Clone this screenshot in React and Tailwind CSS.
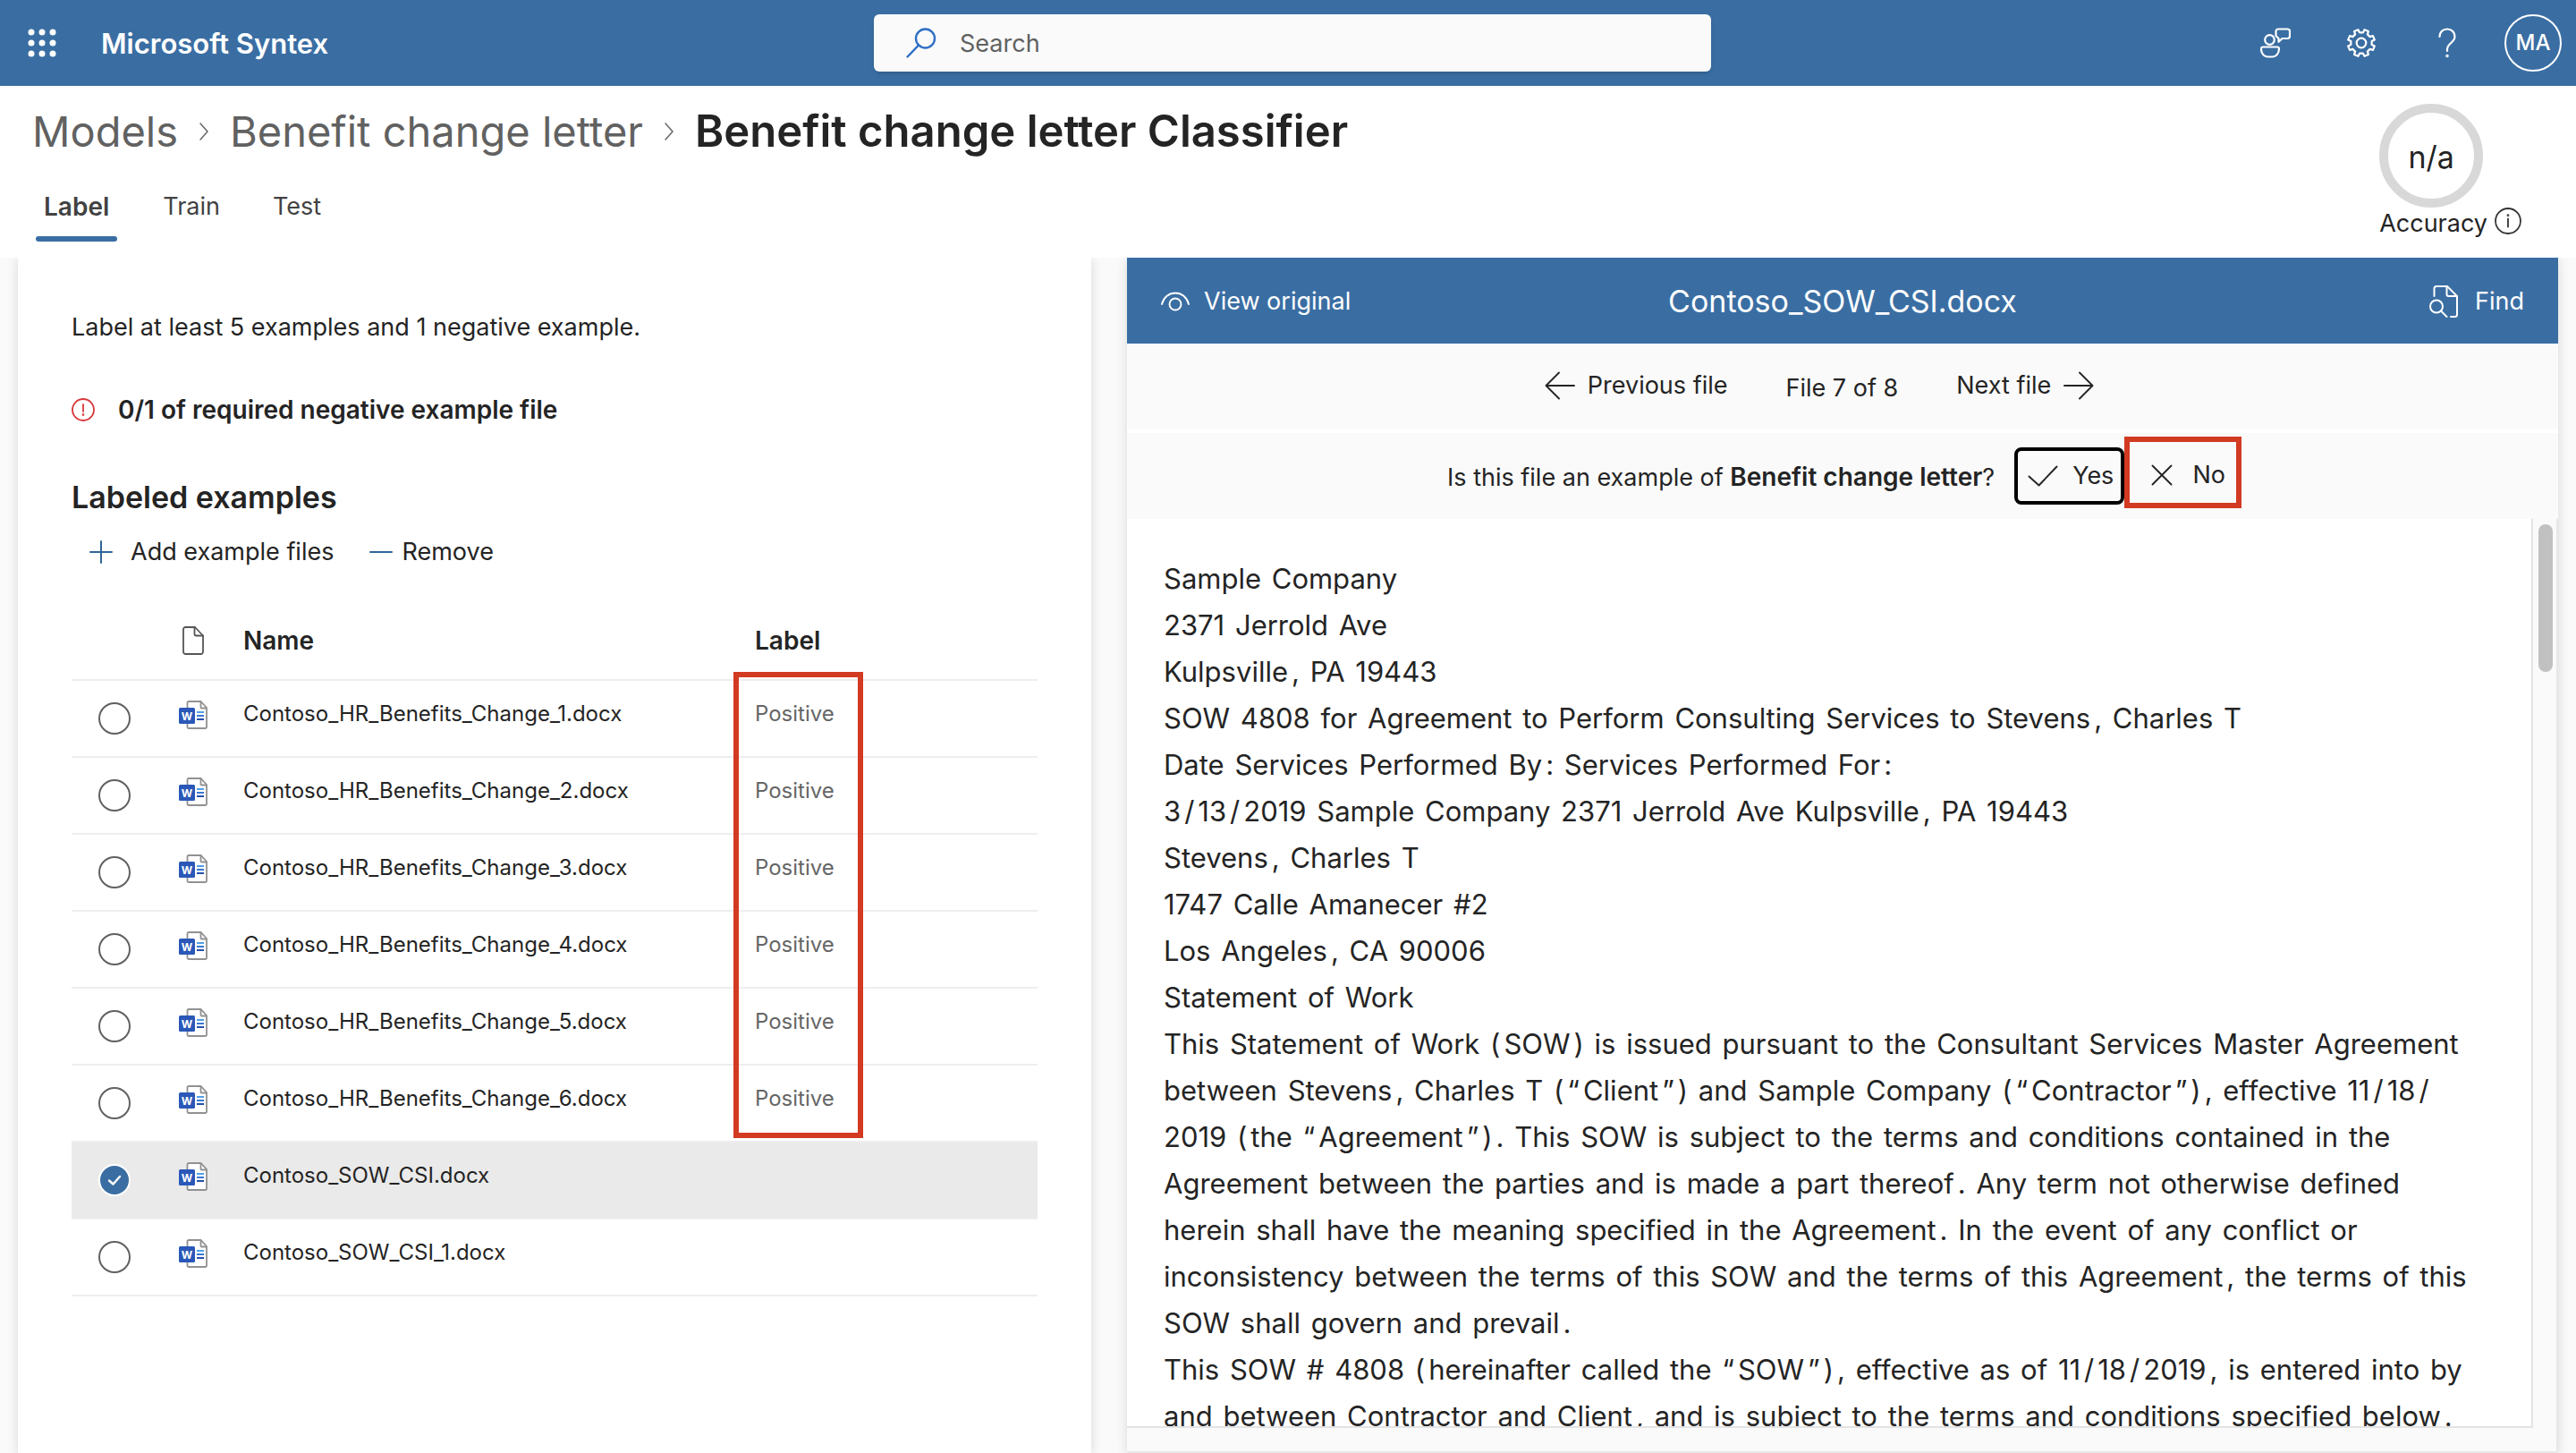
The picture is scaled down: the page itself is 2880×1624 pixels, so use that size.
import { Fragment } from "react";

const files = [
  { name: "Contoso_HR_Benefits_Change_1.docx", label: "Positive" },
  { name: "Contoso_HR_Benefits_Change_2.docx", label: "Positive" },
  { name: "Contoso_HR_Benefits_Change_3.docx", label: "Positive" },
  { name: "Contoso_HR_Benefits_Change_4.docx", label: "Positive" },
  { name: "Contoso_HR_Benefits_Change_5.docx", label: "Positive" },
  { name: "Contoso_HR_Benefits_Change_6.docx", label: "Positive" },
  { name: "Contoso_SOW_CSI.docx", label: "", selected: true },
  { name: "Contoso_SOW_CSI_1.docx", label: "" },
];

const paragraphs = [
  "Sample Company",
  "2371 Jerrold Ave",
  "Kulpsville, PA 19443",
  "SOW 4808 for Agreement to Perform Consulting Services to Stevens, Charles T",
  "Date Services Performed By: Services Performed For:",
  "3/13/2019 Sample Company 2371 Jerrold Ave Kulpsville, PA 19443",
  "Stevens, Charles T",
  "1747 Calle Amanecer #2",
  "Los Angeles, CA 90006",
  "Statement of Work",
  "This Statement of Work (SOW) is issued pursuant to the Consultant Services Master Agreement between Stevens, Charles T (“Client”) and Sample Company (“Contractor”), effective 11/18/2019 (the “Agreement”). This SOW is subject to the terms and conditions contained in the Agreement between the parties and is made a part thereof. Any term not otherwise defined herein shall have the meaning specified in the Agreement. In the event of any conflict or inconsistency between the terms of this SOW and the terms of this Agreement, the terms of this SOW shall govern and prevail.",
  "This SOW # 4808 (hereinafter called the “SOW”), effective as of 11/18/2019, is entered into by and between Contractor and Client, and is subject to the terms and conditions specified below.",
];

const stroke = { fill: "none", stroke: "currentColor", strokeLinecap: "round", strokeLinejoin: "round" };

function gearPath() {
  const point = (deg, r) => {
    const a = (deg * Math.PI) / 180;
    return `${(16 + r * Math.cos(a)).toFixed(2)} ${(16 + r * Math.sin(a)).toFixed(2)}`;
  };
  const points = [];
  for (let i = 0; i < 8; i++) {
    const a = 22.5 + i * 45;
    points.push(point(a - 13, 11.8), point(a - 9, 15.2), point(a + 9, 15.2), point(a + 13, 11.8));
  }
  return `M${points.join("L")}Z`;
}

function WaffleIcon() {
  return (
    <svg viewBox="0 0 32 32" className="size-8" fill="currentColor" aria-hidden="true">
      {[4, 16, 28].map((y) => [4, 16, 28].map((x) => <circle key={`${x}-${y}`} cx={x} cy={y} r="3.5" />))}
    </svg>
  );
}

function SearchIcon() {
  return (
    <svg viewBox="0 0 34 34" className="size-[34px] text-[#2f6fc4]" strokeWidth="2.4" {...stroke} aria-hidden="true">
      <circle cx="21.5" cy="12" r="10.5" />
      <path d="M14 19.5 1.5 32.5" />
    </svg>
  );
}

function FeedbackIcon() {
  return (
    <svg viewBox="0 0 34 34" className="size-[34px]" strokeWidth="2.2" {...stroke} aria-hidden="true">
      <circle cx="10.5" cy="13.5" r="5.3" />
      <path d="M3 21.5h16a2 2 0 0 1 2 2c0 5-3 9-8 9h-4c-5 0-8-4-8-9a2 2 0 0 1 2-2Z" />
      <path d="M17.5 9V4A2.5 2.5 0 0 1 20 1.5h10.5A2.5 2.5 0 0 1 33 4v5.5a2.5 2.5 0 0 1-2.5 2.5h-6l-4 3.8V12L17.5 9Z" />
    </svg>
  );
}

function GearIcon() {
  return (
    <svg viewBox="0 0 32 32" className="size-8" strokeWidth="2.2" {...stroke} aria-hidden="true">
      <path d={gearPath()} />
      <circle cx="16" cy="16" r="5.3" />
    </svg>
  );
}

function HelpIcon() {
  return (
    <svg viewBox="0 0 20 34" className="h-[34px] w-5" strokeWidth="2.2" {...stroke} aria-hidden="true">
      <path d="M1.5 10C1.5 5 5 1.5 10 1.5S18.5 5 18.5 10c0 6.5-8.5 7.5-8.5 14v2" />
      <circle cx="10" cy="31.5" r="0.7" />
    </svg>
  );
}

function Chevron() {
  return (
    <svg viewBox="0 0 12 20" className="h-5 w-3 text-[#666]" strokeWidth="1.5" {...stroke} aria-hidden="true">
      <path d="m2 1 8 9-8 9" />
    </svg>
  );
}

function InfoIcon() {
  return (
    <svg viewBox="0 0 30 30" className="size-[30px] text-[#333]" strokeWidth="1.8" {...stroke} aria-hidden="true">
      <circle cx="15" cy="15" r="14" />
      <path d="M15 12.5v9" />
      <circle cx="15" cy="8.7" r="0.5" />
    </svg>
  );
}

function ErrorIcon() {
  return (
    <svg viewBox="0 0 26 26" className="size-[26px] text-[#d8373a]" strokeWidth="1.8" {...stroke} aria-hidden="true">
      <circle cx="13" cy="13" r="12" />
      <path d="M13 7v8" />
      <circle cx="13" cy="18.5" r="0.5" />
    </svg>
  );
}

function FileIcon() {
  return (
    <svg viewBox="0 0 24 32" className="h-8 w-6 text-[#555]" strokeWidth="1.8" {...stroke} aria-hidden="true">
      <path d="M3.5 1H14l9 9.5v18a2.5 2.5 0 0 1-2.5 2.5h-17A2.5 2.5 0 0 1 1 28.5v-25A2.5 2.5 0 0 1 3.5 1Z" />
      <path d="M13.5 1v7.5a2 2 0 0 0 2 2H23" />
    </svg>
  );
}

function WordIcon() {
  return (
    <svg viewBox="0 0 32 32" className="size-8" aria-hidden="true">
      <path
        d="M11 1h13.5l6.500 7v21.500a1.500 1.500 0 0 1-1.500 1.500H11a1.500 1.500 0 0 1-1.500-1.500v-27A1.500 1.500 0 0 1 11 1Z"
        fill="#fff"
        stroke="#919191"
        strokeWidth="1.8"
      />
      <path d="M24.5 1v6.5a1 1 0 0 0 1 1H31" fill="none" stroke="#919191" strokeWidth="1.8" />
      <rect x="0" y="8" width="18" height="18" rx="1.5" fill="#2b58b8" />
      <text x="9" y="21.5" fontSize="12" fontWeight="700" fill="#fff" textAnchor="middle" fontFamily="Inter, sans-serif">
        W
      </text>
      <path d="M20 13h8" stroke="#52a0ea" strokeWidth="2" />
      <path d="M20 17h8" stroke="#3a78d2" strokeWidth="2" />
      <path d="M20 21h8" stroke="#2650ac" strokeWidth="2" />
    </svg>
  );
}

function EyeIcon() {
  return (
    <svg viewBox="0 0 32 22" className="h-[22px] w-8" strokeWidth="1.9" {...stroke} aria-hidden="true">
      <path d="M1 14C3 6 9 1.5 16 1.5S29 6 31 14" />
      <circle cx="16" cy="14" r="6.5" />
    </svg>
  );
}

function FindIcon() {
  return (
    <svg viewBox="0 0 34 38" className="h-[38px] w-[34px]" strokeWidth="2" {...stroke} aria-hidden="true">
      <path d="M6.5 13V4.5A2.5 2.5 0 0 1 9 2h12l11 11v20.5a2.5 2.5 0 0 1-2.5 2.5H25" />
      <path d="M20.5 2v9a2 2 0 0 0 2 2H32" />
      <circle cx="9" cy="24.5" r="7" />
      <path d="m14 29.5 6.5 6.5" />
    </svg>
  );
}

function ArrowIcon({ direction }) {
  return (
    <svg viewBox="0 0 34 32" className="h-8 w-[34px]" strokeWidth="1.9" {...stroke} aria-hidden="true">
      <path d={direction === "left" ? "M33 16H1.5M16 1.5 1.5 16 16 30.5" : "M1 16h31.5M18 1.5 32.5 16 18 30.5"} />
    </svg>
  );
}

function Tokens({ text }) {
  return text.split(" ").map((word, i) => (
    <Fragment key={i}>
      {i > 0 && " "}
      {word.match(/[\w#]+|[^\w#]/g).map((token, j, all) => (
        <Fragment key={j}>
          <span className={j < all.length - 1 ? "mr-1" : "mr-[3px]"}>{token}</span>
          {token === "/" && <wbr />}
        </Fragment>
      ))}
    </Fragment>
  ));
}

function TopBar() {
  return (
    <header className="grid h-24 shrink-0 grid-cols-[1fr_936px_1fr] items-center bg-[#3a6ea3] pl-2.5 text-white">
      <div className="flex items-center gap-[50px] pl-[21px]">
        <button type="button" aria-label="App launcher">
          <WaffleIcon />
        </button>
        <a href="#home" className="pt-0.5 text-[31px] leading-9 font-semibold">
          Microsoft Syntex
        </a>
      </div>
      <label className="flex h-16 items-center gap-[26px] rounded-md bg-[#fafafa] pr-6 pl-9 shadow-md">
        <SearchIcon />
        <input
          type="search"
          aria-label="Search"
          placeholder="Search"
          className="min-w-0 flex-1 bg-transparent pt-0.5 text-[27px] leading-9 text-[#333] outline-none placeholder:text-[#616161]"
        />
      </label>
      <div className="flex items-center justify-end">
        <button type="button" aria-label="Feedback" className="flex w-24 justify-center">
          <FeedbackIcon />
        </button>
        <button type="button" aria-label="Settings" className="flex w-24 justify-center">
          <GearIcon />
        </button>
        <button type="button" aria-label="Help" className="flex w-24 justify-center">
          <HelpIcon />
        </button>
        <div className="flex w-24 justify-center">
          <button type="button" className="size-16 rounded-full border-2 border-white text-2xl font-medium">
            MA
          </button>
        </div>
      </div>
    </header>
  );
}

function PageHeading() {
  return (
    <div className="flex shrink-0 items-start justify-between bg-white pr-[61px] pl-9">
      <div className="pt-[21px]">
        <nav aria-label="Breadcrumb" className="flex items-center gap-[23px] leading-[60px]">
          <a href="#models" className="text-[47px] text-[#616161]">
            Models
          </a>
          <Chevron />
          <a href="#benefit-change-letter" className="text-[47px] text-[#616161]">
            Benefit change letter
          </a>
          <Chevron />
          <h1 className="text-[49px] font-semibold text-[#242424]">Benefit change letter Classifier</h1>
        </nav>
        <div role="tablist" className="flex gap-[43px] pt-9 pb-[18px] pl-1 leading-9 text-[#424242]">
          <button type="button" role="tab" aria-selected="true" className="px-[9px] text-[28px] font-semibold">
            <span className="block pb-[15px]">Label</span>
            <span className="-mx-[9px] block h-1.5 rounded-full bg-[#3a6ea3]" />
          </button>
          <button type="button" role="tab" aria-selected="false" className="px-2 pb-[21px] text-[27px]">
            Train
          </button>
          <button type="button" role="tab" aria-selected="false" className="px-2 pb-[21px] text-[27px]">
            Test
          </button>
        </div>
      </div>
      <div className="pt-5 text-[#242424]">
        <div className="flex size-[116px] items-center justify-center rounded-full border-10 border-[#d8d8d8] pt-0.5 text-[34px]">
          n/a
        </div>
        <div className="flex gap-2 text-[27px] leading-9">
          <span>Accuracy</span>
          <button type="button" aria-label="About accuracy" className="self-start">
            <InfoIcon />
          </button>
        </div>
      </div>
    </div>
  );
}

function FileRow({ file, first }) {
  return (
    <tr className={file.selected ? "bg-[#eaeaea]" : ""}>
      <td className="h-[86px] border-b-2 border-[#eee] pl-[30px]">
        <span className="relative flex size-9">
          <input
            type="checkbox"
            defaultChecked={file.selected}
            aria-label={`Select ${file.name}`}
            className="size-9 appearance-none rounded-full border-2 border-[#616161] bg-white checked:border-white checked:bg-[#3a6ea3]"
          />
          {file.selected && (
            <svg viewBox="0 0 36 36" className="pointer-events-none absolute inset-0 text-white" strokeWidth="2.5" {...stroke} aria-hidden="true">
              <path d="m12 18.5 4.5 4L24 14" />
            </svg>
          )}
        </span>
      </td>
      <td className="border-b-2 border-[#eee] pb-2">
        <WordIcon />
      </td>
      <td className="border-b-2 border-[#eee] pb-2.5 text-2xl text-[#242424]">{file.name}</td>
      <td className={`border-b-2 border-[#eee] pb-2.5 text-2xl text-[#666] ${first ? "relative z-10" : ""}`}>
        {file.label}
        {first && <span className="pointer-events-none absolute -top-2.5 -left-6 h-[521px] w-[145px] border-6 border-[#d23a22]" />}
      </td>
    </tr>
  );
}

function ExamplesPanel() {
  return (
    <section className="bg-white px-15 pt-[60px] text-[#242424] shadow-[0_2px_12px_rgba(0,0,0,0.14)]">
      <p className="text-[27px] leading-9">Label at least 5 examples and 1 negative example.</p>
      <div className="mt-14 flex items-center gap-[26px]">
        <ErrorIcon />
        <p className="text-[28px] leading-9 font-semibold">0/1 of required negative example file</p>
      </div>
      <h2 className="mt-[58px] text-[34px] leading-[44px] font-semibold">Labeled examples</h2>
      <div className="mt-[21px] flex gap-10 pl-5 text-[27px] leading-9">
        <button type="button" className="flex items-center gap-5">
          <svg viewBox="0 0 26 26" className="size-[26px] text-[#2f6699]" strokeWidth="2" {...stroke} aria-hidden="true">
            <path d="M13 1v24M1 13h24" />
          </svg>
          Add example files
        </button>
        <button type="button" className="flex items-center gap-2.5">
          <svg viewBox="0 0 26 26" className="size-[26px] text-[#2f6699]" strokeWidth="2" {...stroke} aria-hidden="true">
            <path d="M1 13h24" />
          </svg>
          Remove
        </button>
      </div>
      <table className="mt-[38px] w-full table-fixed border-separate border-spacing-0 text-left">
        <thead>
          <tr className="text-[28px]">
            <th className="h-[88px] w-30 border-b-2 border-[#eee]" aria-label="Selected" />
            <th className="w-18 border-b-2 border-[#eee] pl-1" aria-label="File type">
              <FileIcon />
            </th>
            <th className="border-b-2 border-[#eee] font-semibold">Name</th>
            <th className="w-[316px] border-b-2 border-[#eee] font-semibold">Label</th>
          </tr>
        </thead>
        <tbody>
          {files.map((file, i) => (
            <FileRow key={file.name} file={file} first={i === 0} />
          ))}
        </tbody>
      </table>
    </section>
  );
}

function ViewerPanel() {
  return (
    <section className="flex min-h-0 flex-col bg-[#fafafa] text-[#242424] shadow-[0_2px_12px_rgba(0,0,0,0.14)]">
      <div className="grid h-24 shrink-0 grid-cols-[1fr_auto_1fr] items-center bg-[#3a6ea3] px-[38px] pt-0.5 text-[27px] text-white">
        <button type="button" className="flex items-center gap-4 justify-self-start">
          <EyeIcon />
          View original
        </button>
        <h2 className="text-[34px] leading-[44px]">Contoso_SOW_CSI.docx</h2>
        <button type="button" className="flex items-center gap-[18px] justify-self-end">
          <FindIcon />
          Find
        </button>
      </div>
      <div className="flex h-24 shrink-0 items-center justify-center gap-[65px] pr-[52px] pb-0.5 text-[27px] leading-9">
        <button type="button" className="flex items-center gap-3.5">
          <ArrowIcon direction="left" />
          Previous file
        </button>
        <span className="pt-1.5">File 7 of 8</span>
        <button type="button" className="flex items-center gap-3.5">
          Next file
          <ArrowIcon direction="right" />
        </button>
      </div>
      <div className="flex h-[100px] shrink-0 items-center justify-center border-t-4 border-white text-[27px] leading-9">
        <p className="pt-0.5 pr-[22px] pl-1">
          Is this file an example of <b className="text-[28px] font-semibold">Benefit change letter</b>?
        </p>
        <button type="button" className="flex h-16 items-center gap-4 rounded-lg border-4 border-black pr-2 pl-[11px]">
          <svg viewBox="0 0 34 24" className="h-6 w-[34px]" strokeWidth="1.9" {...stroke} aria-hidden="true">
            <path d="m1.5 12.5 11 10L32.5 1.5" />
          </svg>
          Yes
        </button>
        <button type="button" className="-mt-2 flex h-20 items-center gap-[22px] border-6 border-[#d23a22] pt-1.5 pr-3 pl-6">
          <svg viewBox="0 0 24 24" className="size-6" strokeWidth="1.9" {...stroke} aria-hidden="true">
            <path d="m1.5 1.5 21 21M22.5 1.5l-21 21" />
          </svg>
          No
        </button>
      </div>
      <div className="flex min-h-0 flex-1 border-r-2 border-b-2 border-[#e8e8e8] pb-[26px]">
        <article className="min-w-0 flex-1 overflow-hidden border-r-2 border-b-2 border-[#e3e3e3] bg-white pt-[41px] pr-[62px] pl-[41px] text-[31px] leading-[52px]">
          {paragraphs.map((text, i) => (
            <p key={i}>
              <Tokens text={text} />
            </p>
          ))}
        </article>
        <div className="w-[26px] pt-1.5 pl-1.5">
          <div className="h-[165px] w-4 rounded-full bg-[#c1c1c1]" />
        </div>
      </div>
    </section>
  );
}

export default function App() {
  return (
    <div className="flex h-screen flex-col overflow-hidden bg-white font-['Inter',sans-serif]">
      <TopBar />
      <PageHeading />
      <main className="grid min-h-0 flex-1 grid-cols-[3fr_4fr] gap-10 overflow-hidden bg-[#fafafa] px-5">
        <ExamplesPanel />
        <ViewerPanel />
      </main>
    </div>
  );
}
